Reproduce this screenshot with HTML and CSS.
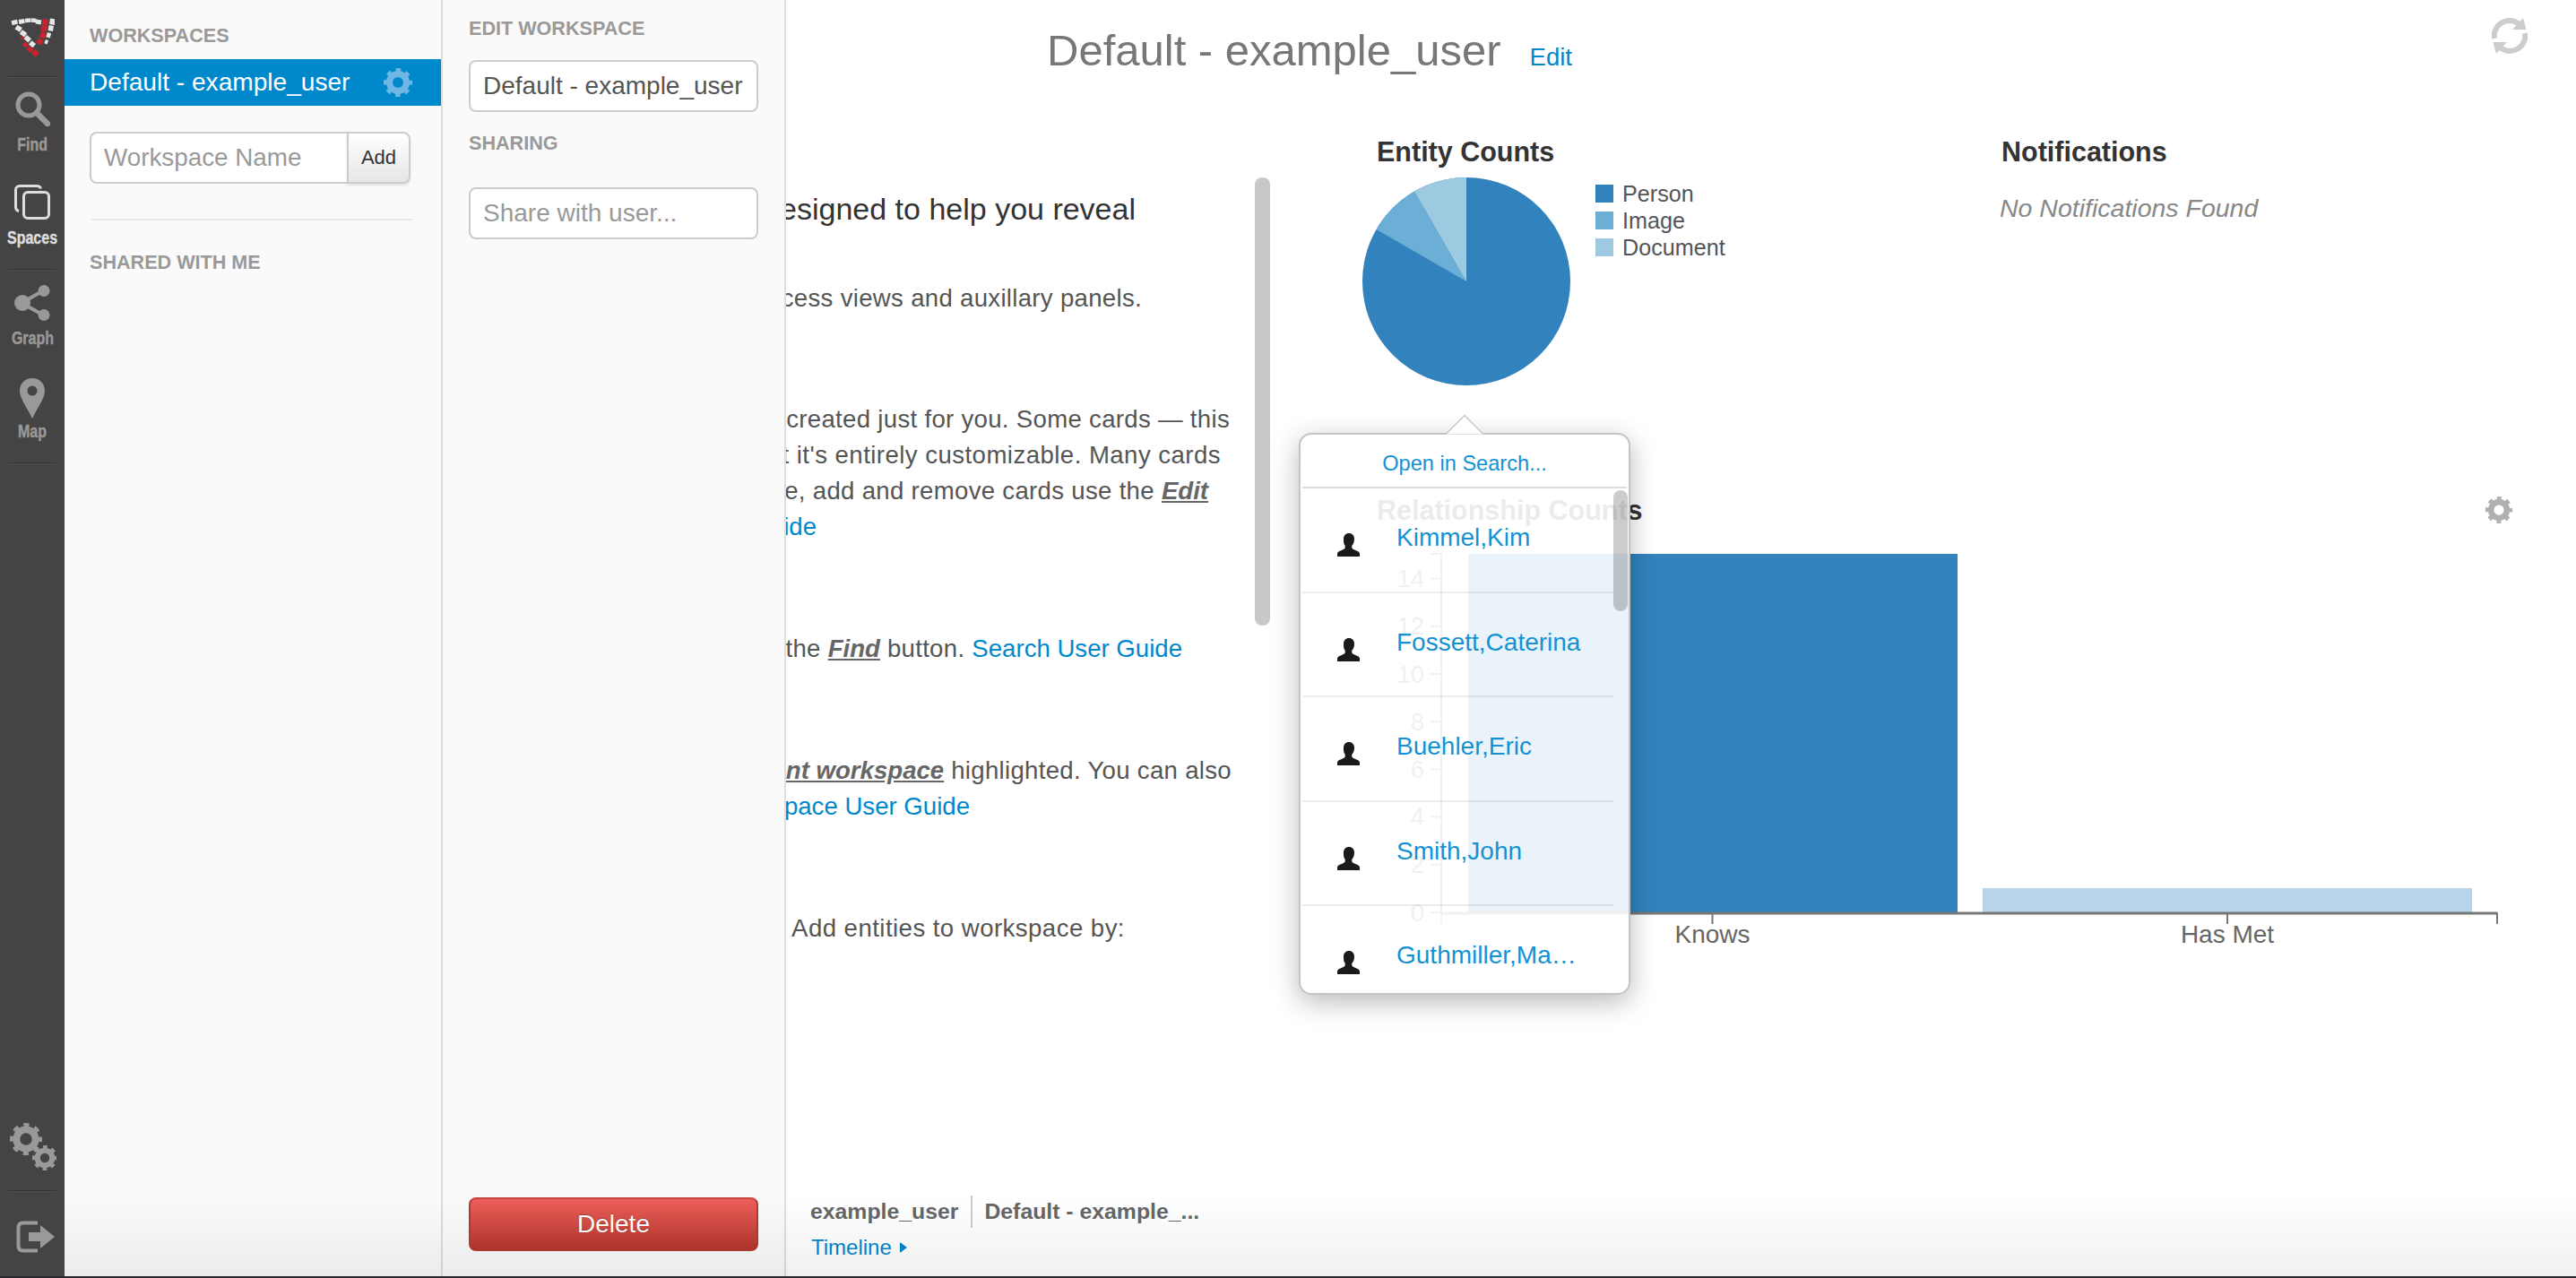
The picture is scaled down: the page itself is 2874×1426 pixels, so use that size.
FILE: index.html
```html
<!DOCTYPE html>
<html lang="en">
<head>
<meta charset="utf-8">
<title>Default - example_user</title>
<link rel="stylesheet" href="styles.css">
</head>
<body>
<svg class="defs" width="0" height="0" aria-hidden="true">
  <symbol id="gear" viewBox="-16 -16 32 32">
    <circle r="9.5" fill="none" stroke="currentColor" stroke-width="7"/>
    <circle r="13.5" fill="none" stroke="currentColor" stroke-width="5" stroke-dasharray="5.3 5.3" stroke-dashoffset="2.65"/>
  </symbol>
  <symbol id="person" viewBox="0 0 26 26">
    <path d="M13 0c3.600 0 6 2.700 6 6.400 0 3-1.100 5.800-2.700 7.400v2.200c0 1.200 1.200 1.900 3.400 2.700 3.500 1.300 5.300 2.300 5.300 4.100V26H0v-3.200c0-1.800 1.800-2.800 5.300-4.100 2.200-.8 3.400-1.500 3.400-2.700v-2.200C7.100 12.200 7 9.400 7 6.400 7 2.700 9.400 0 13 0z" fill="currentColor"/>
  </symbol>
</svg>
<div class="app">
  <nav class="nav">
    <svg class="logo" viewBox="11 20 50 44" width="50" height="44" aria-hidden="true">
      <g fill="#e6e6e6">
        <rect x="13" y="22.500" width="6.500" height="5" transform="rotate(-14 16 25)"/>
        <rect x="21" y="21.500" width="6.500" height="5" transform="rotate(-10 24 24)"/>
        <rect x="28" y="20.500" width="6" height="4.500" transform="rotate(-5 31 22.500)"/>
        <rect x="34.500" y="20.500" width="6" height="4.500" transform="rotate(3 37.500 22.500)"/>
        <rect x="40" y="22" width="6" height="5" transform="rotate(8 43 24.500)"/>
        <rect x="55.500" y="21" width="6" height="6.500" transform="rotate(8 58.500 24)"/>
        <rect x="54" y="28.500" width="5.500" height="6" transform="rotate(10 56.700 31.700)"/>
        <rect x="52" y="36.500" width="4.500" height="5.500" transform="rotate(16 54.300 39.300)"/>
        <rect x="50" y="44.500" width="3.500" height="4.500" transform="rotate(22 51.700 46.700)"/>
        <rect x="17.500" y="29" width="6.500" height="5.500" transform="rotate(30 20.700 31.700)"/>
        <rect x="23" y="34.500" width="6.500" height="5.500" transform="rotate(35 26 37)"/>
        <rect x="27.500" y="40.500" width="6.500" height="5.500" transform="rotate(40 30.700 43.300)"/>
        <rect x="33" y="46.500" width="6" height="5.500" transform="rotate(40 36 49.300)"/>
      </g>
      <g fill="#c8242e">
        <rect x="47.500" y="21.500" width="6" height="6.500" transform="rotate(10 50.500 24.500)"/>
        <rect x="46" y="28.500" width="6.500" height="6.500" transform="rotate(14 49.300 31.700)"/>
        <rect x="44.500" y="36" width="6.500" height="6.500" transform="rotate(20 47.700 39.300)"/>
        <rect x="41" y="43.500" width="6.500" height="6" transform="rotate(25 44.300 46.700)"/>
        <rect x="23.500" y="40.500" width="3" height="3.500" transform="rotate(40 25 41.700)"/>
        <rect x="25.500" y="47.500" width="5.500" height="5" transform="rotate(45 28.300 50)"/>
        <rect x="30.500" y="52" width="6" height="5.500" transform="rotate(45 33.300 55)"/>
        <rect x="36" y="56" width="6.500" height="6.500" transform="rotate(45 39.300 59.300)"/>
      </g>
    </svg>
    <div class="sep sep-top"></div>
    <a class="nav-item item-find">
      <svg viewBox="0 0 39 39" width="39" height="39" aria-hidden="true"><circle cx="15" cy="15" r="12" fill="none" stroke="currentColor" stroke-width="5"/><path d="M24 24l12 12" stroke="currentColor" stroke-width="6.500" stroke-linecap="round"/></svg>
      <span class="nav-label">Find</span>
    </a>
    <a class="nav-item item-spaces">
      <svg viewBox="0 0 40 39" width="40" height="39" aria-hidden="true"><path d="M5 29.500C2.500 29 1.500 27.500 1.500 25V6c0-2.800 1.700-4.500 4.500-4.500h19c2.500 0 4 1 4.500 3" fill="none" stroke="currentColor" stroke-width="3"/><rect x="10.500" y="8.500" width="28" height="29" rx="4.500" fill="none" stroke="currentColor" stroke-width="3"/></svg>
      <span class="nav-label">Spaces</span>
    </a>
    <div class="sep sep-mid"></div>
    <a class="nav-item item-graph">
      <svg viewBox="0 0 40 40" width="40" height="40" aria-hidden="true"><path d="M8 20L33 6M8 20l25 14" stroke="currentColor" stroke-width="4"/><circle cx="9" cy="20" r="9" fill="currentColor"/><circle cx="33" cy="6.500" r="6.500" fill="currentColor"/><circle cx="33" cy="33.500" r="6.500" fill="currentColor"/></svg>
      <span class="nav-label">Graph</span>
    </a>
    <a class="nav-item item-map">
      <svg viewBox="0 0 28 45" width="28" height="45" aria-hidden="true"><path fill-rule="evenodd" d="M14 0C6 0 0 6 0 14c0 9 9 20 14 31 5-11 14-22 14-31C28 6 22 0 14 0zm0 8.500a5.500 5.500 0 1 1 0 11 5.500 5.500 0 0 1 0-11z" fill="currentColor"/></svg>
      <span class="nav-label">Map</span>
    </a>
    <div class="sep sep-mid"></div>
    <div class="nav-bottom">
      <svg class="gears" viewBox="0 0 52 53" width="52" height="53" aria-hidden="true">
        <use href="#gear" x="0" y="0" width="36" height="36"/>
        <use href="#gear" x="25" y="25" width="28" height="28"/>
      </svg>
      <div class="sep sep-low"></div>
      <svg class="logout" viewBox="0 0 43 36" width="43" height="36" aria-hidden="true"><path d="M24 2.500H8C4.500 2.500 2.500 4.500 2.500 8v20c0 3.500 2 5.500 5.500 5.500h16" fill="none" stroke="currentColor" stroke-width="4"/><path d="M14 13h13V5l16 13-16 13v-8H14z" fill="currentColor"/></svg>
    </div>
  </nav>

  <aside class="panel panel-list">
    <h2 class="panel-heading heading-workspaces">WORKSPACES</h2>
    <div class="ws-row">
      <span>Default - example_user</span>
      <svg class="ws-gear" width="32" height="32" aria-hidden="true"><use href="#gear"/></svg>
    </div>
    <form class="add-form">
      <input class="add-input" type="text" placeholder="Workspace Name">
      <button class="add-button" type="button">Add</button>
    </form>
    <hr class="panel-rule">
    <h2 class="panel-heading heading-shared">SHARED WITH ME</h2>
  </aside>

  <aside class="panel panel-edit">
    <h2 class="panel-heading heading-edit">EDIT WORKSPACE</h2>
    <input class="field field-name" type="text" value="Default - example_user">
    <h2 class="panel-heading heading-sharing">SHARING</h2>
    <input class="field field-share" type="text" placeholder="Share with user...">
    <button class="delete-button" type="button">Delete</button>
  </aside>

  <main class="main">
    <header class="main-header">
      <h1 class="title">Default - example_user</h1>
      <a class="title-edit">Edit</a>
      <svg class="refresh" viewBox="0 0 40 40" width="40" height="40" aria-hidden="true">
        <g id="refresh-half" fill="#cccccc">
          <path d="M3 23A17 17 0 0 1 30 6.500" fill="none" stroke="#cccccc" stroke-width="6"/>
          <path d="M35 0l3.500 13H23z"/>
        </g>
        <use href="#refresh-half" transform="rotate(180 20 20)"/>
      </svg>
    </header>
    <div class="content">
      <section class="intro">
        <div class="intro-body">
          <div class="lines">
            <p class="line lead gap-first end-133"><span>designed to help you reveal</span></p>
            <p class="line gap-60 end-126"><span>access views and auxillary panels.</span></p>
            <p class="line gap-95 end-28"><span>created just for you. Some cards — this</span></p>
            <p class="line line-wide end-38"><span>but it's entirely customizable. Many cards</span></p>
            <p class="line end-52"><span>rearrange, add and remove cards use the <em class="ui-ref">Edit</em></span></p>
            <p class="line end-489"><span><a class="link">Guide</a></span></p>
            <p class="line gap-96 end-81"><span>the <em class="ui-ref">Find</em> button. <a class="link">Search User Guide</a></span></p>
            <p class="line gap-96 end-26"><span><em class="ui-ref">current workspace</em> highlighted. You can also</span></p>
            <p class="line end-318"><span><a class="link">Workspace User Guide</a></span></p>
            <p class="line line-wide gap-96 end-145"><span>Add entities to workspace by:</span></p>
          </div>
          <div class="thumb"></div>
        </div>
        <footer class="intro-foot">
          <div class="foot-names"><b class="foot-user">example_user</b><b class="foot-space">Default - example_...</b></div>
          <a class="foot-link">Timeline <i class="caret"></i></a>
        </footer>
      </section>

      <section class="dash">
        <div class="dash-top">
          <div class="card-entity">
            <h3 class="card-title">Entity Counts</h3>
            <div class="entity-body">
              <svg class="pie" viewBox="0 0 232 232" width="232" height="232" aria-hidden="true">
                <circle cx="116" cy="116" r="116" fill="#3182bd"/>
                <path d="M116 116L15.540 58A116 116 0 0 1 58 15.540z" fill="#6baed6"/>
                <path d="M116 116L58 15.540A116 116 0 0 1 116 0z" fill="#9ecae1"/>
              </svg>
              <ul class="legend">
                <li class="legend-item"><i class="swatch swatch-a"></i>Person</li>
                <li class="legend-item"><i class="swatch swatch-b"></i>Image</li>
                <li class="legend-item"><i class="swatch swatch-c"></i>Document</li>
              </ul>
            </div>
          </div>
          <div class="card-notes">
            <h3 class="card-title">Notifications</h3>
            <p class="notes-empty">No Notifications Found</p>
          </div>
        </div>
        <div class="card-rel">
          <div class="rel-head">
            <h3 class="card-title">Relationship Counts</h3>
            <svg class="rel-gear" width="30" height="30" aria-hidden="true"><use href="#gear"/></svg>
          </div>
          <svg class="bars" viewBox="0 0 1267 460" width="1267" height="460" role="img">
            <rect x="102" y="18" width="546" height="400" fill="#3182bd"/>
            <rect x="676" y="391" width="546" height="27" fill="#b8d4e8"/>
            <path class="axis" d="M72 18V430M60 18h12M60 45.600h12M60 98.800h12M60 152h12M60 205.200h12M60 258.400h12M60 311.600h12M60 364.800h12M60 418h12M374.500 418v13M949 418v13M1250 418v13"/>
            <path class="axis-base" d="M72 419H1250"/>
            <g class="tick-y">
              <text x="53" y="45.600">14</text><text x="53" y="98.800">12</text><text x="53" y="152">10</text><text x="53" y="205.200">8</text><text x="53" y="258.400">6</text><text x="53" y="311.600">4</text><text x="53" y="364.800">2</text><text x="53" y="418">0</text>
            </g>
            <g class="tick-x">
              <text x="374.500" y="442">Knows</text><text x="949" y="442">Has Met</text>
            </g>
          </svg>
        </div>
      </section>
    </div>

    <div class="popover">
      <svg class="pop-arrow" viewBox="0 0 44 23" width="44" height="23" aria-hidden="true"><path d="M1 22.500L22 1.500l21 21" fill="#ffffff" stroke="#c8c8c8" stroke-width="1.500"/></svg>
      <a class="pop-head">Open in Search...</a>
      <ul class="pop-list">
        <li class="pop-row"><svg class="pop-icon" width="26" height="26" aria-hidden="true"><use href="#person"/></svg><a class="pop-name">Kimmel,Kim</a></li>
        <li class="pop-row"><svg class="pop-icon" width="26" height="26" aria-hidden="true"><use href="#person"/></svg><a class="pop-name">Fossett,Caterina</a></li>
        <li class="pop-row"><svg class="pop-icon" width="26" height="26" aria-hidden="true"><use href="#person"/></svg><a class="pop-name">Buehler,Eric</a></li>
        <li class="pop-row"><svg class="pop-icon" width="26" height="26" aria-hidden="true"><use href="#person"/></svg><a class="pop-name">Smith,John</a></li>
        <li class="pop-row"><svg class="pop-icon" width="26" height="26" aria-hidden="true"><use href="#person"/></svg><a class="pop-name">Guthmiller,Ma…</a></li>
      </ul>
      <div class="pop-thumb"></div>
    </div>
  </main>
  <div class="bottom-fade"></div>
</div>
</body>
</html>
```

FILE: styles.css
```css
* { box-sizing: border-box; }
html, body { margin: 0; padding: 0; height: 1426px; overflow: hidden; }
body { background: #26282b; font-family: "Liberation Sans", Arial, sans-serif; color: #555; }
h1, h2, h3, p, ul { margin: 0; padding: 0; font-weight: normal; }
ul { list-style: none; }
a { text-decoration: none; }
.defs { position: absolute; }

.app { position: relative; display: flex; height: 1424px; background: #fff; overflow: hidden; }

/* left navigation */
.nav { flex: none; width: 72px; background: #444; color: #999; display: flex; flex-direction: column; align-items: center; }
.logo { flex: none; margin-top: 20px; }
.sep { flex: none; width: 54px; height: 2px; background: #333; border-bottom: 1px solid #505050; }
.sep-top { margin-top: 21px; }
.sep-mid { margin-top: 23px; }
.nav-item { display: flex; flex-direction: column; align-items: center; flex: none; }
.nav-item svg { display: block; }
.nav-label { display: block; font-size: 20px; line-height: 24px; font-weight: bold; transform: scaleX(.8); white-space: nowrap; -webkit-text-stroke: .4px currentColor; }
.item-find { margin-top: 15px; }
.item-find .nav-label { margin-top: 8px; }
.item-spaces { margin-top: 33px; color: #ddd; }
.item-spaces .nav-label { margin-top: 8px; }
.item-graph { margin-top: 16px; }
.item-graph .nav-label { margin-top: 7px; }
.item-map { margin-top: 33px; }
.item-map .nav-label { margin-top: 2px; }
.nav-bottom { margin-top: auto; padding-bottom: 26px; display: flex; flex-direction: column; align-items: center; }
.gears { display: block; margin-left: 2px; }
.sep-low { margin-top: 22px; }
.logout { display: block; margin-top: 32px; margin-left: 7px; }

/* panels */
.panel { flex: none; background: #fafafa; border-right: 2px solid #ddd; display: flex; flex-direction: column; }
.panel-list { width: 422px; }
.panel-edit { width: 383px; padding: 0 29px 28px; }
.panel-heading { font-size: 21.6px; line-height: 30px; font-weight: bold; color: #999; white-space: nowrap; }
.heading-workspaces { margin: 25px 0 11px 28px; }
.ws-row { height: 52px; padding: 0 32px 0 28px; background: #0088cc; color: #fff; font-size: 28.1px; display: flex; align-items: center; justify-content: space-between; }
.ws-gear { color: #70b8e4; display: block; }
.add-form { display: flex; margin: 29px 34px 0 28px; height: 58px; }
.add-input { flex: 1; min-width: 0; border: 2px solid #ccc; border-right: 0; border-radius: 8px 0 0 8px; background: #fff; padding: 0 14px; font: 27.8px "Liberation Sans", Arial, sans-serif; color: #555; }
.add-input::placeholder, .field::placeholder { color: #999; opacity: 1; }
.add-button { flex: none; width: 71px; border: 2px solid #ccc; border-radius: 0 8px 8px 0; background: linear-gradient(#fff, #e6e6e6); font: 22px "Liberation Sans", Arial, sans-serif; color: #333; padding: 0; box-shadow: 0 2px 3px rgba(0,0,0,.1); }
.panel-rule { margin: 39px 32px 0 30px; border: 0; height: 2px; background: #e8e8e8; }
.heading-shared { margin: 32px 0 0 28px; }
.heading-edit { margin-top: 17px; }
.field { display: block; height: 58px; width: 100%; border: 2px solid #ccc; border-radius: 8px; background: #fff; padding: 0 14px; font: 28px "Liberation Sans", Arial, sans-serif; color: #555; }
.field-name { margin-top: 20px; }
.heading-sharing { margin-top: 20px; }
.field-share { margin-top: 34px; }
.delete-button { margin-top: auto; height: 60px; flex: none; width: 100%; border: 2px solid #b33a33; border-top-color: #c9453f; border-radius: 8px; background: linear-gradient(#ee5f5b, #b5352c); color: #fff; font: 28px "Liberation Sans", Arial, sans-serif; padding: 0; text-shadow: 0 -1px 0 rgba(0,0,0,.25); }

/* main */
.main { flex: 1; min-width: 0; position: relative; display: flex; flex-direction: column; }
.main-header { flex: none; height: 120px; padding: 20px 54px 0 291px; display: flex; align-items: baseline; }
.title { font-size: 49px; line-height: 60px; color: #777; margin-top: 6px; white-space: nowrap; }
.title-edit { margin-left: 32px; font-size: 27.5px; color: #0088cc; }
.refresh { margin-left: auto; align-self: flex-start; display: block; }
.content { flex: 1; min-height: 0; display: flex; }

/* intro card */
.intro { flex: none; width: 540px; display: flex; flex-direction: column; }
.intro-body { display: flex; }
.lines { flex: 1; min-width: 0; overflow: hidden; }
.line { display: flex; justify-content: flex-end; font-size: 27.6px; line-height: 40px; color: #555; white-space: nowrap; letter-spacing: .3px; }
.line > span { flex: none; }
.line-wide { letter-spacing: .45px; }
.lead { font-size: 34px; line-height: 40px; color: #333; letter-spacing: 0; }
.gap-first { margin-top: 93px; }
.gap-60 { margin-top: 60px; }
.gap-95 { margin-top: 95px; }
.gap-96 { margin-top: 96px; }
.end-133 { padding-right: 133px; }
.end-126 { padding-right: 126px; }
.end-28 { padding-right: 28px; }
.end-38 { padding-right: 38px; }
.end-52 { padding-right: 52px; }
.end-489 { padding-right: 489px; }
.end-81 { padding-right: 81px; }
.end-26 { padding-right: 26px; }
.end-318 { padding-right: 318px; }
.end-145 { padding-right: 145px; }
.ui-ref { font-weight: bold; font-style: italic; text-decoration: underline; color: #666; letter-spacing: 0; }
.link { color: #0088cc; letter-spacing: 0; }
.thumb { flex: none; width: 17px; height: 500px; margin-top: 78px; border-radius: 8px; background: #c8c8c8; }
.intro-foot { margin-top: auto; padding: 0 0 17px 27px; }
.foot-names { display: flex; height: 36px; align-items: center; font-size: 24.8px; color: #666; white-space: nowrap; }
.foot-user { padding-right: 14px; }
.foot-space { border-left: 2px solid #ccc; padding-left: 13px; line-height: 36px; }
.foot-link { display: flex; align-items: center; margin: 7px 0 0 1px; height: 30px; font-size: 24px; color: #0088cc; white-space: pre; }
.caret { width: 0; height: 0; margin-left: 3px; border-left: 8px solid #0088cc; border-top: 6px solid transparent; border-bottom: 6px solid transparent; }

/* dashboard cards */
.dash { flex: 1; min-width: 0; padding: 31px 71px 0 119px; }
.dash-top { display: flex; height: 279px; }
.card-entity { flex: none; width: 697px; }
.card-title { font-size: 30.5px; line-height: 36px; font-weight: bold; color: #333; white-space: nowrap; }
.entity-body { display: flex; margin-top: 11px; }
.pie { display: block; flex: none; margin-left: -16px; }
.legend { margin: 3px 0 0 28px; }
.legend-item { display: flex; align-items: center; height: 30px; font-size: 25.2px; color: #555; }
.swatch { width: 20px; height: 20px; margin-right: 10px; flex: none; }
.swatch-a { background: #3182bd; }
.swatch-b { background: #6baed6; }
.swatch-c { background: #9ecae1; }
.notes-empty { margin: 27px 0 0 -2px; font-size: 28.5px; line-height: 36px; font-style: italic; color: #888; white-space: nowrap; }
.card-rel { margin-top: 121px; }
.rel-head { display: flex; align-items: center; justify-content: space-between; height: 36px; }
.rel-gear { color: #b0b0b0; display: block; }
.bars { display: block; margin-top: 13px; }
.axis { fill: none; stroke: #777; stroke-width: 2; }
.axis-base { fill: none; stroke: #777; stroke-width: 3; }
.tick-y text { font-size: 27.5px; fill: #666; text-anchor: end; dominant-baseline: central; }
.tick-x text { font-size: 28px; fill: #666; text-anchor: middle; dominant-baseline: central; }

/* popover over the cards */
.popover { position: absolute; left: 572px; top: 483px; width: 370px; height: 627px; padding: 0 2px; background: rgba(255,255,255,.9); border: 2px solid #c4c4c4; border-radius: 14px; box-shadow: 0 8px 30px rgba(0,0,0,.28); }
.pop-arrow { position: absolute; left: 161px; top: -23px; display: block; }
.pop-head { display: block; height: 60px; line-height: 64px; text-align: center; font-size: 23.6px; color: #1292d4; border-bottom: 2px solid #ddd; }
.pop-row { display: flex; height: 116.5px; margin-right: 15px; border-bottom: 2px solid rgba(0,0,0,.07); }
.pop-row:last-child { border-bottom: 0; }
.pop-icon { flex: none; color: #1a1a1a; margin: 50px 0 0 39px; display: block; }
.pop-name { margin: 38px 0 0 40px; font-size: 28px; line-height: 34px; color: #1292d4; white-space: nowrap; }
.pop-thumb { position: absolute; right: 1px; top: 62px; width: 16px; height: 135px; border-radius: 8px; background: rgba(0,0,0,.2); }

.bottom-fade { position: absolute; left: 72px; right: 0; bottom: 0; height: 90px; background: linear-gradient(rgba(0,0,0,0), rgba(0,0,0,.06)); pointer-events: none; }
```
